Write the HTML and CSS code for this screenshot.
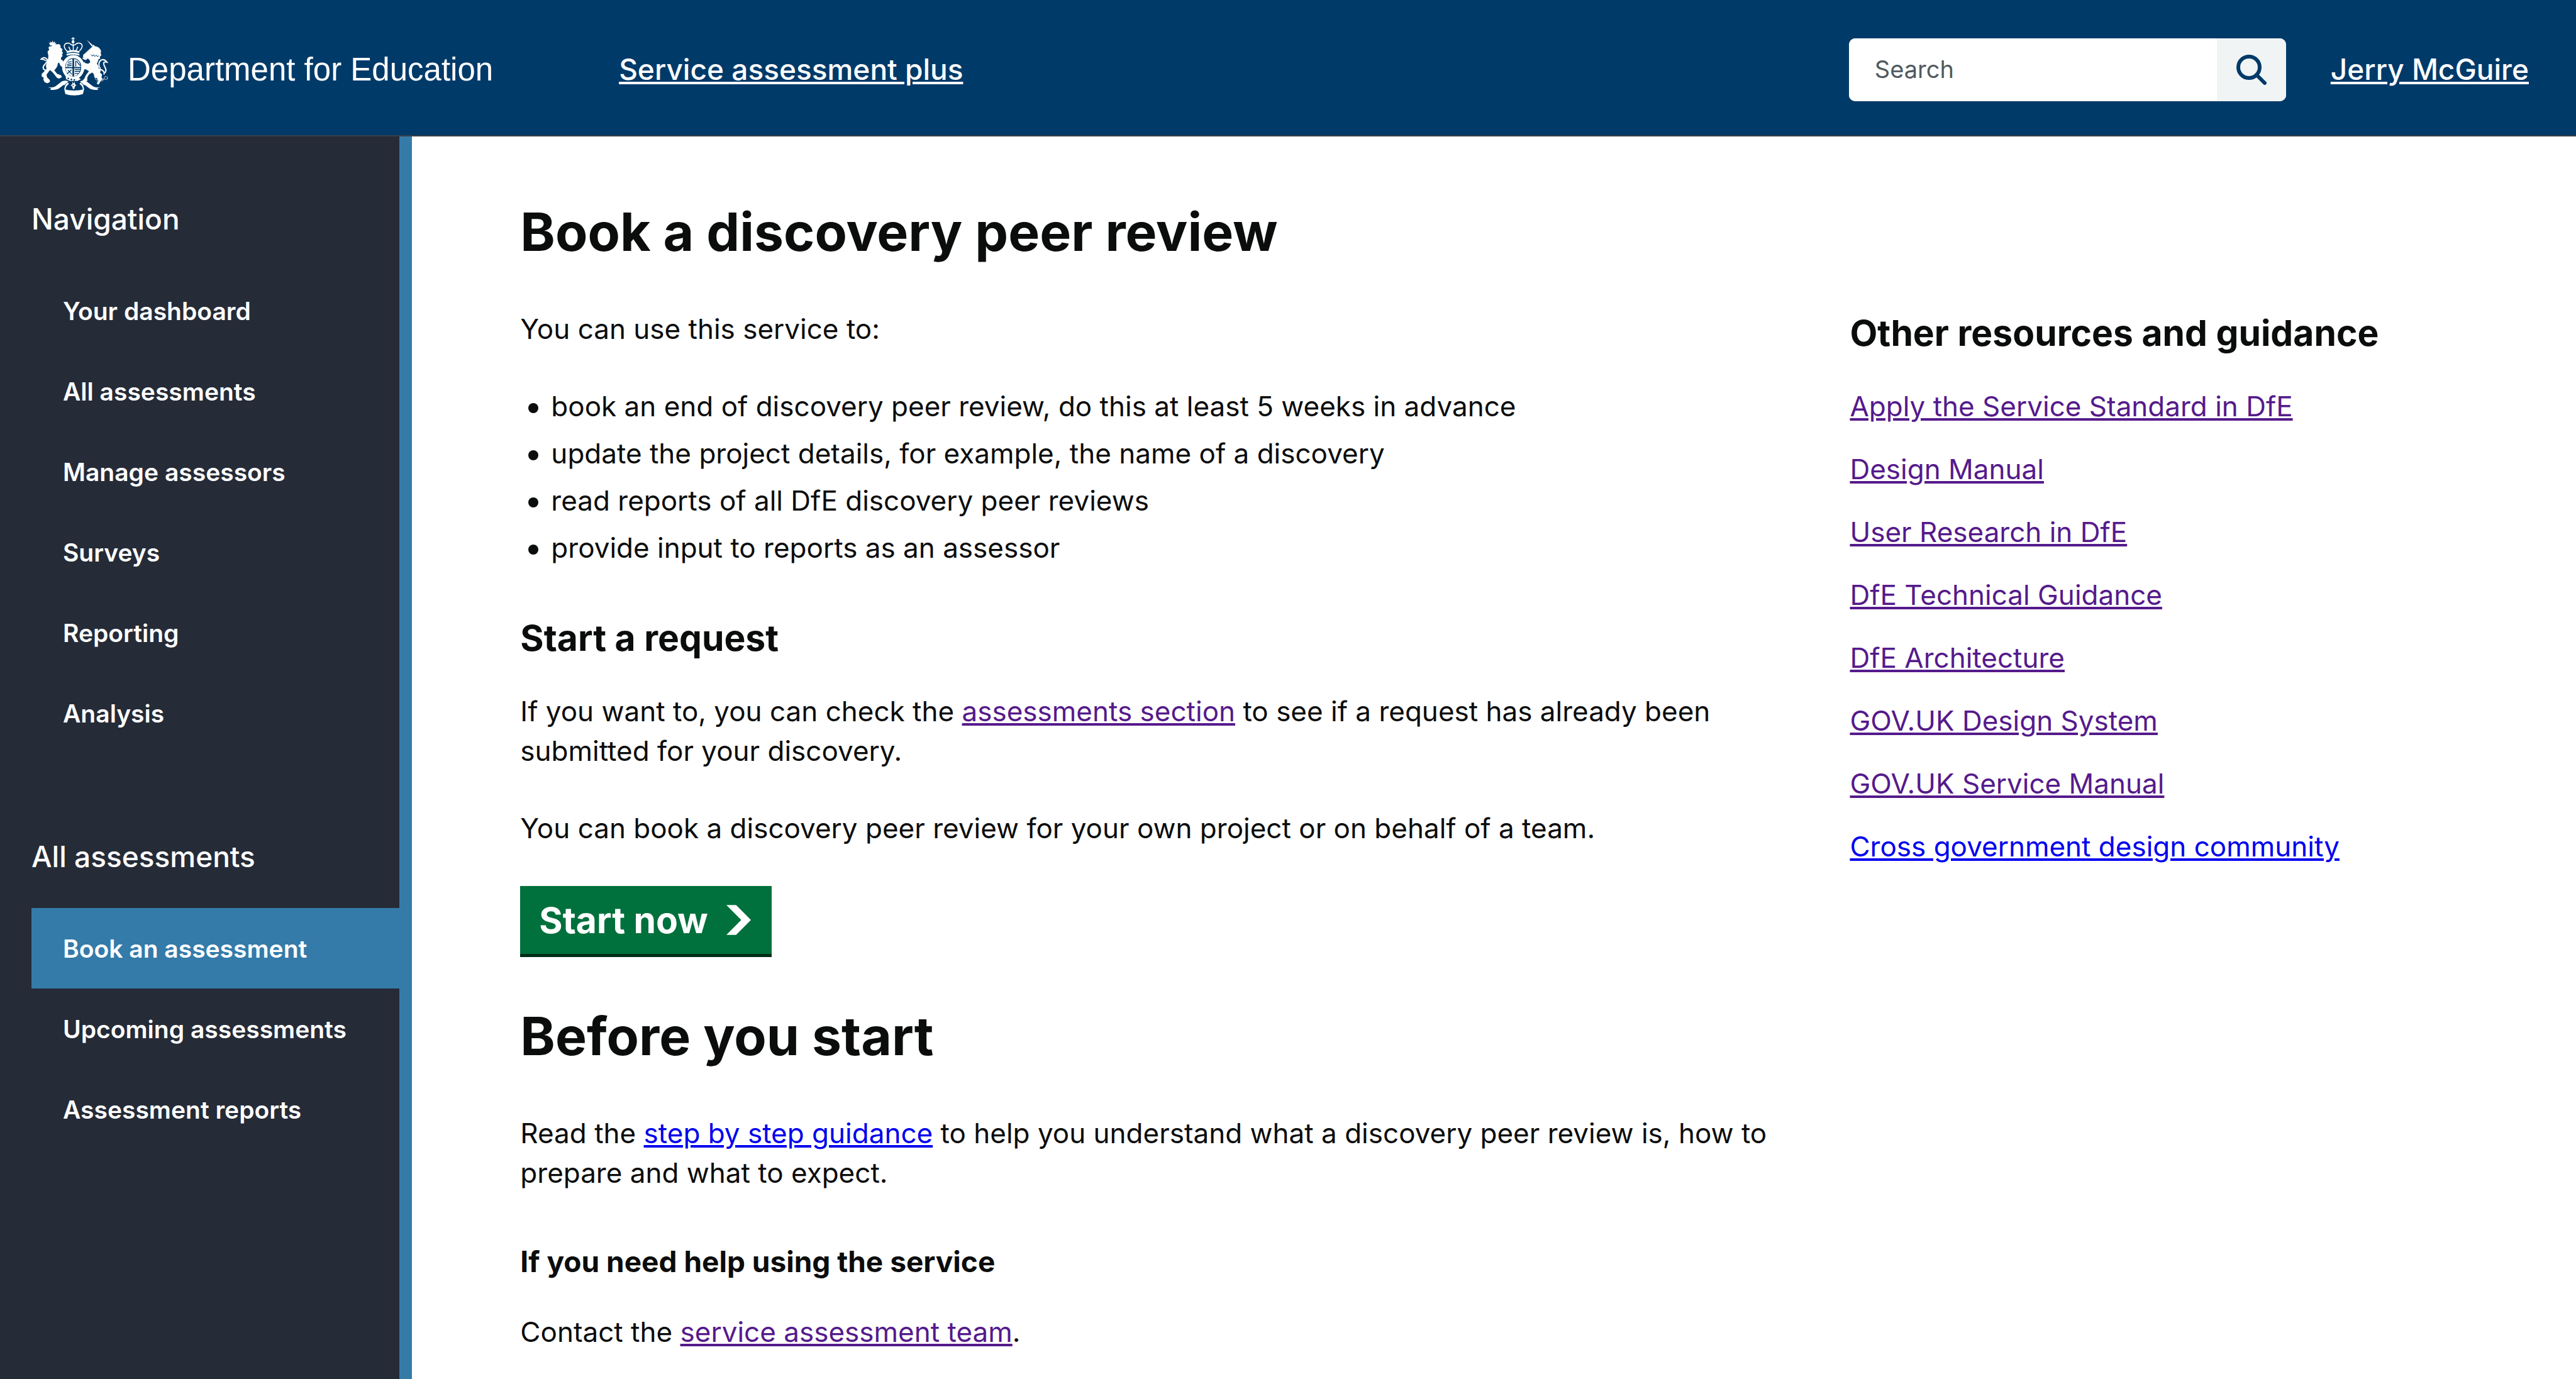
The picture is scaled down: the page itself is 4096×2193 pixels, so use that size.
FILE: index.html
```html
<!DOCTYPE html>
<html lang="en">
<head>
<meta charset="utf-8">
<title>Book a discovery peer review</title>
<link rel="stylesheet" href="styles.css">
</head>
<body>
<header class="header">
  <div class="brand">
    <svg class="crest" viewBox="66 47 340 331" aria-hidden="true">
      <g fill="#fff">
        <!-- crown -->
        <path d="M227 56h5l-1 5h6v5h-6v5a8 8 0 0 1 5 8 7 7 0 0 1-14 0 8 8 0 0 1 5-8v-5h-6v-5h6z"/>
        <path d="M197 137c20-8 46-8 63 0l-1 8c-20-7-41-7-60 0z"/>
      </g>
      <g fill="none" stroke="#fff" stroke-linecap="round">
        <path stroke-width="5" stroke-dasharray="5 3" d="M200 122c-10-8-15-20-12-28 5-11 22-12 31-3 6 5 16 5 22 0 10-10 26-8 31 3 2 9-3 20-13 28"/>
        <path stroke-width="9" d="M202 127c16-6 38-6 54 0"/>
        <path stroke-width="5" stroke-dasharray="4 3" d="M230 90v32M209 104l8 17M251 104l-8 17"/>
      </g>
      <g fill="#fff">
        <!-- lion -->
        <path d="M113 80l7 6 1-10 7 7 3-11 4 11 7-7 0 10 7-4-6 14h-24z"/>
        <path d="M122 101c10-7 26-13 43-10l5 9-2 6 11 9-4 8 6 8-5 7 3 8-7 7-1 10 9 5 8 18 1 13-8 2-12-7-7-16-6 4c0 14-8 25-17 33l14 17 17 5 6 10-14 8-10-4-22-28-12-9-16 22 3 13 12 12 2 9-12 7-14-5-6-12 1-11-9-4 0-13 13-13 10-12-3-14 9-26 3-20-4-22 8-9-4-9 5-7z"/>
        <!-- unicorn -->
        <path d="M294 69l31 27-6 5z"/>
        <path d="M320 103l8-11 5 8c14 1 24 8 30 22l-2 14 4 6-8 8 2 8-8 4c-2 9-6 15-8 22 8 7 8 15 9 23l10 8-4 11 10 9-3 12 4 12-8 7-9 17-10-4 8-14-5-12-13-3-4-17-8-8-15 10-8 14 0 17-10 3-14-4 10-10 8-18 14-18-15-9-19 1-7-13 10-8-2-9 7-7 12 8 19 3 0-16-11-12-15 1-8-8 2-9z"/>
      </g>
      <path fill="none" stroke="#003a69" stroke-width="3" d="M314 140l8 7 5-7 6 9 7-7 6 8 7-6"/>
      <g fill="none" stroke="#fff" stroke-linecap="round">
        <path stroke-width="6" d="M103 217c-18-5-22-15-11-28 10-11 19-20 10-29-7-8-18-6-25 1 10 0 14 2 21 7"/>
        <path stroke-width="6" d="M356 209c19 5 25 18 21 24M358 204c-9-13-7-31 5-38 12-6 21 1 28 10-13-3-18 0-14 13 5 15 15 24 6 36"/>
        <path stroke-width="6" d="M277 157l12 6 13-10M278 184l21 6 10-8"/>
        <circle cx="341" cy="254" r="6" stroke-width="2"/>
        <circle cx="351" cy="266" r="7" stroke-width="2"/>
        <circle cx="366" cy="260" r="7" stroke-width="2"/>
        <circle cx="386" cy="252" r="8" stroke-width="2"/>
        <path stroke-width="2" d="M374 258l5-4"/>
      </g>
      <!-- garter and shield -->
      <ellipse cx="230" cy="200" rx="46" ry="51" fill="none" stroke="#fff" stroke-width="15"/>
      <ellipse cx="230" cy="201" rx="37" ry="43" fill="#003a69"/>
      <path fill="#fff" d="M226 160v39h-33q2-34 33-39zM234 160q28 5 31 39h-31zM193 205h33v38q-30-6-33-38zM234 205h31q-3 32-31 38z"/>
      <path fill="none" stroke="#003a69" stroke-width="4" d="M203 177l19-4M200 187l22-5M205 214l18 20M200 232l22-20M242 169v28M246 171l15 21M237 211h27M237 220h25M237 230h19M201 194l22-4"/>
      <path fill="#fff" d="M193 243l17 7 22 4 24-4 10 8-16 8h-36l-18-8z"/>
      <g fill="#003a69"><circle cx="206" cy="254" r="4"/><circle cx="221" cy="259" r="4"/><circle cx="235" cy="261" r="4"/></g>
      <path fill="#fff" d="M226 270l5 9 6-9 1 12 7 4-7 6-3 12h-7l-3-12-8-6 8-4z"/>
      <circle cx="230" cy="287" r="3" fill="#003a69"/>
      <!-- ribbon -->
      <g fill="#fff">
        <path d="M108 295c14 4 28 2 40-6l25-19c10-6 20-8 34-1l-8 7c-4 2-8 5-10 10l-5-1-20 15c-12 9-28 10-45 8l6-6z"/>
        <path d="M205 274c-10 4-16 14-18 32l6 2c1-14 6-22 16-28z"/>
        <g transform="translate(469) scale(-1 1)">
          <path d="M108 295c14 4 28 2 40-6l25-19c10-6 20-8 34-1l-8 7c-4 2-8 5-10 10l-5-1-20 15c-12 9-28 10-45 8l6-6z"/>
          <path d="M205 274c-10 4-16 14-18 32l6 2c1-14 6-22 16-28z"/>
        </g>
        <path d="M187 306c28 8 64 8 95 0l-6 22c-28 9-56 9-84 0z"/>
      </g>
    </svg>
    <span class="department">Department for Education</span>
  </div>
  <a class="header-link" href="#">Service assessment plus</a>
  <form class="search" role="search">
    <input class="search-input" type="search" placeholder="Search" aria-label="Search">
    <button class="search-button" type="button" aria-label="Search">
      <svg class="search-icon" viewBox="0 0 48 48" aria-hidden="true"><circle cx="20" cy="20" r="17" fill="none" stroke="#003a69" stroke-width="6"/><path d="M32 32l13 13" stroke="#003a69" stroke-width="6" stroke-linecap="round"/></svg>
    </button>
  </form>
  <a class="header-link user" href="#">Jerry McGuire</a>
</header>
<div class="page">
  <nav class="sidebar" aria-label="Main">
    <h2 class="nav-title">Navigation</h2>
    <ul class="nav-list">
      <li><a class="nav-link" href="#">Your dashboard</a></li>
      <li><a class="nav-link" href="#">All assessments</a></li>
      <li><a class="nav-link" href="#">Manage assessors</a></li>
      <li><a class="nav-link" href="#">Surveys</a></li>
      <li><a class="nav-link" href="#">Reporting</a></li>
      <li><a class="nav-link" href="#">Analysis</a></li>
    </ul>
    <h2 class="nav-title">All assessments</h2>
    <ul class="nav-list">
      <li><a class="nav-link active" href="#" aria-current="page">Book an assessment</a></li>
      <li><a class="nav-link" href="#">Upcoming assessments</a></li>
      <li><a class="nav-link" href="#">Assessment reports</a></li>
    </ul>
  </nav>
  <main class="main">
    <h1 class="heading-xl">Book a discovery peer review</h1>
    <div class="columns">
      <div class="content">
        <p class="body">You can use this service to:</p>
        <ul class="bullets">
          <li>book an end of discovery peer review, do this at least 5 weeks in advance</li>
          <li>update the project details, for example, the name of a discovery</li>
          <li>read reports of all DfE discovery peer reviews</li>
          <li>provide input to reports as an assessor</li>
        </ul>
        <h2 class="heading-m">Start a request</h2>
        <p class="body">If you want to, you can check the <a class="link visited" href="#">assessments section</a> to see if a request has already been submitted for your discovery.</p>
        <p class="body">You can book a discovery peer review for your own project or on behalf of a team.</p>
        <button class="start" type="button">Start now
          <svg class="start-icon" viewBox="0 0 33 40" aria-hidden="true"><path fill="currentColor" d="M0 0h13l20 20-20 20H0l20-20z"/></svg>
        </button>
        <h2 class="heading-xl">Before you start</h2>
        <p class="body">Read the <a class="link" href="#">step by step guidance</a> to help you understand what a discovery peer review is, how to prepare and what to expect.</p>
        <h3 class="heading-s">If you need help using the service</h3>
        <p class="body last">Contact the <a class="link visited" href="#">service assessment team</a>.</p>
      </div>
      <aside class="resources">
        <h2 class="heading-m">Other resources and guidance</h2>
        <ul class="resource-list">
          <li><a class="link visited" href="#">Apply the Service Standard in DfE</a></li>
          <li><a class="link visited" href="#">Design Manual</a></li>
          <li><a class="link visited" href="#">User Research in DfE</a></li>
          <li><a class="link visited" href="#">DfE Technical Guidance</a></li>
          <li><a class="link visited" href="#">DfE Architecture</a></li>
          <li><a class="link visited" href="#">GOV.UK Design System</a></li>
          <li><a class="link visited" href="#">GOV.UK Service Manual</a></li>
          <li><a class="link" href="#">Cross government design community</a></li>
        </ul>
      </aside>
    </div>
  </main>
</div>
</body>
</html>
```
FILE: styles.css
```css
* { box-sizing: border-box; }

body {
  margin: 0;
  min-height: 100vh;
  display: flex;
  flex-direction: column;
  background: #fff;
  color: #0b0c0c;
  font-family: Inter, "Liberation Sans", sans-serif;
  font-size: 44px;
  line-height: 63px;
}

h1, h2, h3, p, ul { margin: 0; padding: 0; }
ul { list-style: none; }

/* Header */
.header {
  display: flex;
  align-items: center;
  height: 217px;
  padding: 61px 75px 55px 62px;
  background: #003a69;
  border-bottom: 2px solid #3b3f49;
  color: #fff;
}
.brand { display: flex; align-items: center; gap: 28px; margin-right: 200px; }
.crest { flex: none; width: 113px; height: 110px; }
.department { font-family: "Liberation Sans", Arial, sans-serif; font-size: 51px; white-space: nowrap; }
.header-link {
  color: #fff;
  font-size: 46px;
  font-weight: 500;
  white-space: nowrap;
  text-decoration: underline;
  text-decoration-thickness: 4px;
  text-underline-offset: 3px;
}
.search {
  display: flex;
  width: 695px;
  height: 100px;
  margin-left: auto;
  margin-right: 71px;
  border-radius: 10px;
  overflow: hidden;
  background: #fff;
}
.search-input {
  flex: 1;
  min-width: 0;
  padding: 0 41px;
  border: 0;
  background: #fff;
  color: #0b0c0c;
  font: inherit;
  font-size: 38px;
}
.search-input::placeholder { color: #505a5f; opacity: 1; }
.search-button {
  display: flex;
  align-items: center;
  justify-content: center;
  width: 110px;
  padding: 0;
  border: 0;
  background: #f0f4f5;
}
.search-icon { width: 48px; height: 48px; }

/* Page */
.page { flex: 1; display: flex; }

.sidebar {
  flex: none;
  width: 16%;
  padding: 100px 0 0 50px;
  background: #252b37;
  border-right: 20px solid #347ba9;
  color: #fff;
}
.nav-title { font-size: 46px; font-weight: 500; margin-bottom: 50px; }
.nav-list + .nav-title { margin-top: 133px; }
.nav-link {
  display: flex;
  align-items: center;
  height: 128px;
  padding-left: 50px;
  color: #fff;
  font-size: 39px;
  font-weight: 600;
  text-decoration: none;
}
.active { background: #347ba9; }

.main { flex: 1; min-width: 0; padding: 102px 135px 0 172px; }
.columns { display: grid; grid-template-columns: 2fr 1fr; column-gap: 75px; }

.heading-xl { font-size: 84px; line-height: 100px; font-weight: 700; margin-bottom: 73px; }
.heading-m { font-size: 57px; line-height: 75px; font-weight: 700; margin-bottom: 48px; }
.heading-s { font-size: 46px; line-height: 63px; font-weight: 700; margin: 78px 0 49px; }
.body { margin-bottom: 60px; }
.body.last { margin-bottom: 30px; }

.bullets { margin-bottom: 74px; }
.bullets li { display: flex; align-items: center; }
.bullets li + li { margin-top: 12px; }
.bullets li::before {
  content: "";
  width: 16px;
  height: 16px;
  margin: 4px 20px 0 13px;
  border-radius: 50%;
  background: currentColor;
}

.link {
  color: #0000ee;
  text-decoration: underline;
  text-decoration-thickness: 4px;
  text-underline-offset: 3px;
}
.visited { color: #551a8b; }

.start {
  display: flex;
  align-items: center;
  gap: 29px;
  height: 108px;
  margin-bottom: 81px;
  padding: 0 33px 0 30px;
  border: 0;
  background: #00703c;
  box-shadow: 0 5px 0 #002d18;
  color: #fff;
  font-family: inherit;
  font-size: 57px;
  font-weight: 700;
}
.start-icon { width: 39px; height: 48px; }

.resource-list li + li { margin-top: 37px; }
```
